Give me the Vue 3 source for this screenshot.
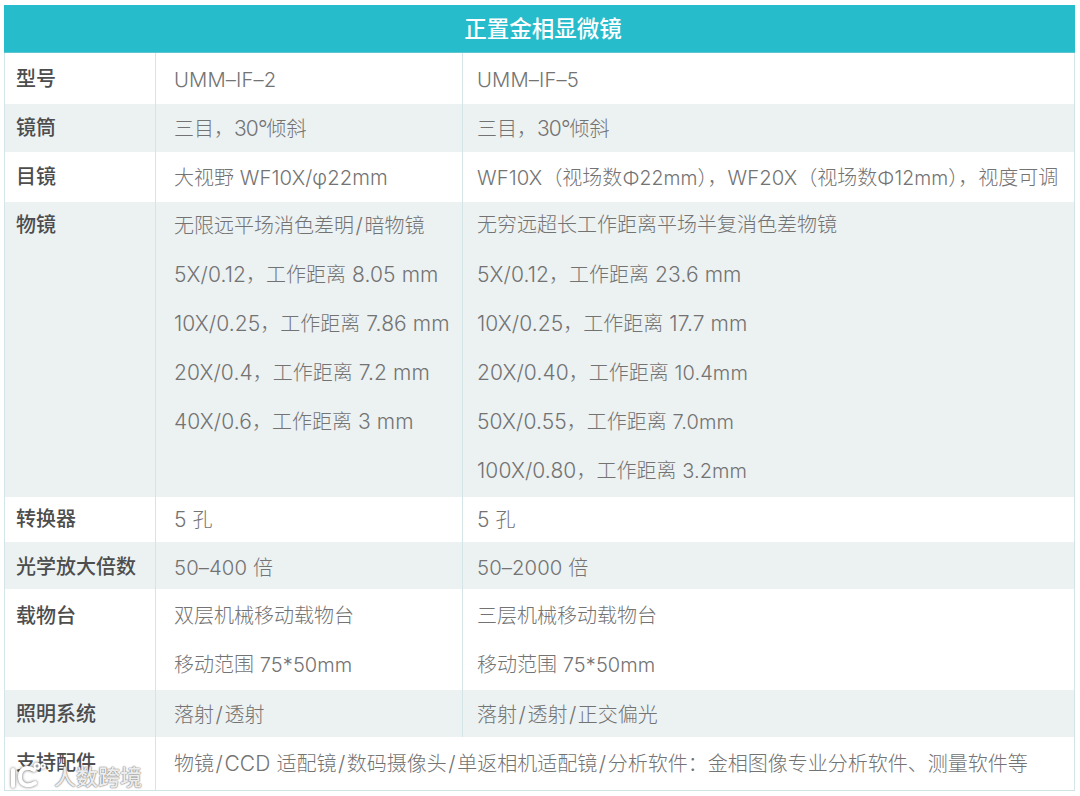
<script setup>
const rows = [
  { label: '型号', h: 51, pad: 12, a: ['UMM–IF–2'], b: ['UMM–IF–5'] },
  { label: '镜筒', h: 48, pad: 10, a: ['三目，30°倾斜'], b: ['三目，30°倾斜'] },
  { label: '目镜', h: 50, pad: 11, a: ['大视野 WF10X/φ22mm'], b: ['WF10X（视场数Φ22mm），WF20X（视场数Φ12mm），视度可调'] },
  { label: '物镜', h: 295, pad: 9, a: ['无限远平场消色差明/暗物镜', '5X/0.12，工作距离 8.05 mm', '10X/0.25，工作距离 7.86 mm', '20X/0.4，工作距离 7.2 mm', '40X/0.6，工作距离 3 mm'], b: ['无穷远超长工作距离平场半复消色差物镜', '5X/0.12，工作距离 23.6 mm', '10X/0.25，工作距离 17.7 mm', '20X/0.40，工作距离 10.4mm', '50X/0.55，工作距离 7.0mm', '100X/0.80，工作距离 3.2mm'] },
  { label: '转换器', h: 45, pad: 8, a: ['5 孔'], b: ['5 孔'] },
  { label: '光学放大倍数', h: 47, pad: 11, a: ['50–400 倍'], b: ['50–2000 倍'] },
  { label: '载物台', h: 101, pad: 13, a: ['双层机械移动载物台', '移动范围 75*50mm'], b: ['三层机械移动载物台', '移动范围 75*50mm'] },
  { label: '照明系统', h: 47, pad: 10, a: ['落射/透射'], b: ['落射/透射/正交偏光'] },
  { label: '支持配件', h: 53, pad: 12, span: ['物镜/CCD 适配镜/数码摄像头/单返相机适配镜/分析软件：金相图像专业分析软件、测量软件等'] }
]

const cjk = /([\u3000-\u303f\u4e00-\u9fff\uff00-\uffef]+)/

function latinClass(t) {
  if (t === '/') return 'lat slash'
  if (t.includes('Φ')) return 'lat phi'
  if (t.includes('°')) return 'lat deg'
  if (/W|–/.test(t)) return 'lat snug'
  if (/\dmm/.test(t)) return 'lat tight'
  return 'lat'
}

function parts(text) {
  return text
    .split(cjk)
    .filter(Boolean)
    .flatMap((t) => (t.length > 1 && t.startsWith('/') ? ['/', t.slice(1)] : [t]))
    .map((t) => ({ t, cls: cjk.test(t) ? '' : latinClass(t) }))
}
</script>

<template>
  <div class="page">
    <div class="table">
      <div class="title">正置金相显微镜</div>
      <div
        v-for="(row, i) in rows"
        :key="row.label"
        class="row"
        :class="{ alt: i % 2 === 1 }"
        :style="{ height: row.h + 'px', paddingTop: row.pad + 'px' }"
      >
        <div class="cell head"><div class="line">{{ row.label }}</div></div>
        <div v-for="(col, c) in row.span ? [row.span] : [row.a, row.b]" :key="c" class="cell" :class="row.span ? 'span' : c ? 'b' : 'a'" :style="{ marginTop: -row.pad + 'px', paddingTop: row.pad + 'px' }">
          <div v-for="t in col" :key="t" class="line">
            <span v-for="(p, k) in parts(t)" :key="k" :class="p.cls">{{ p.t }}</span>
          </div>
        </div>
      </div>
      <div class="mark">
        <svg class="mark-logo" width="36" height="27" viewBox="0 0 36 27" fill="none" stroke="#fff" stroke-linecap="round">
          <path d="M3 8 L3 24" stroke-width="4" />
          <path d="M24 8 C15 3 10 8 10 15 C10 22 17 26 25 21" stroke-width="4" />
          <circle cx="27" cy="4" r="2.5" stroke-width="2" />
          <circle cx="33" cy="4" r="2" stroke-width="1.5" />
        </svg>
        <span class="mark-text">人数跨境</span>
      </div>
    </div>
  </div>
</template>

<style scoped>
.page {
  width: 1080px;
  height: 796px;
  padding: 5px 4px 0;
  box-sizing: border-box;
  background: #fff;
  overflow: hidden;
  font-family: "Inter", "Noto Sans CJK SC", sans-serif;
  font-size: 20px;
  color: #737373;
  font-weight: 300;
}
.table {
  position: relative;
  width: 1071px;
  border-bottom: 1px solid #cfe3e3;
}
.title {
  height: 47px;
  line-height: 47px;
  padding-left: 7px;
  box-sizing: content-box;
  background: #27bccb;
  color: #fff;
  text-align: center;
  font-size: 22.5px;
  font-weight: 500;
  border-bottom: 1px solid #5cc5d0;
}
.row {
  display: grid;
  grid-template-columns: 150px 307px 1fr;
  box-sizing: border-box;
  background: #fff;
  border-left: 1px solid #d3e5e6;
  border-right: 1px solid #d3e5e6;
}
.row.alt {
  background: #ecf1f2;
}
.cell {
  padding-left: 18px;
  white-space: nowrap;
  border-left: 1px solid #d3e5e6;
  box-sizing: border-box;
  display: flex;
  flex-direction: column;
  gap: 20px;
}
.head {
  border-left: 0;
  padding-left: 11px;
  color: #4d4d4d;
  font-weight: 500;
}
.b {
  padding-left: 14px;
}
.span {
  grid-column: 2 / 4;
}
.line {
  height: 29px;
  line-height: 29px;
}
.lat {
  font-size: 21px;
  letter-spacing: 0.1px;
}
.snug {
  font-size: 20.3px;
}
.tight {
  font-size: 20px;
}
.phi {
  font-size: 19.4px;
}
.deg {
  letter-spacing: -0.9px;
}
.slash {
  padding: 0 1.5px;
}
.mark {
  position: absolute;
  left: 6px;
  top: 754px;
  display: flex;
  align-items: center;
  gap: 8px;
}
.mark-logo {
  filter: drop-shadow(0 0 1.5px #666);
}
.mark-text {
  font-size: 22px;
  font-weight: 500;
  color: rgba(255, 255, 255, 0.88);
  text-shadow: 0 0 1.5px #666, 0 0 1px #888;
}
</style>
